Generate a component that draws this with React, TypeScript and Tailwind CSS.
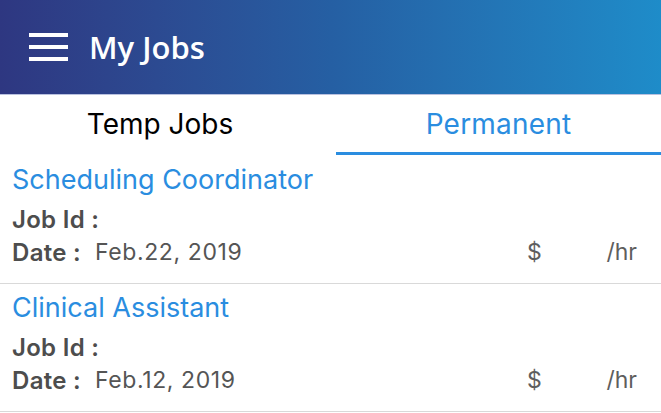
import React from 'react';

const jobs = [
  { title: 'Scheduling Coordinator', jobId: '', date: 'Feb.22, 2019', rate: '' },
  { title: 'Clinical Assistant', jobId: '', date: 'Feb.12, 2019', rate: '' },
];

export default function App() {
  return (
    <div className="w-[661px] h-[413px] overflow-hidden bg-white font-['Inter',sans-serif]">
      {/* Header */}
      <header className="h-[95px] flex items-center border-b border-[#b9c1df] bg-gradient-to-r from-[#2e3781] via-[#255fa3] to-[#1e8cc9]">
        <button className="ml-[29px] flex flex-col gap-[8px] w-[39px]">
          <span className="block h-[4px] bg-white" />
          <span className="block h-[4px] bg-white" />
          <span className="block h-[4px] bg-white" />
        </button>
        <h1 className="ml-[21px] text-[31px] font-semibold text-white font-['Open_Sans',sans-serif] leading-none">
          My Jobs
        </h1>
      </header>

      {/* Tabs */}
      <div className="flex h-[61px] gap-[16px]">
        <div className="w-[320px] flex items-center justify-center text-[28px] text-black pb-[4px]">
          Temp Jobs
        </div>
        <div className="flex-1 relative flex items-center justify-center text-[28px] text-[#2a8de0] pb-[4px] tracking-[0.2px]">
          Permanent
          <span className="absolute left-0 right-0 bottom-[1px] h-[3px] bg-[#2a8de0]" />
        </div>
      </div>

      {/* Job list */}
      <ul>
        {jobs.map((job) => (
          <li key={job.title} className="pl-[12px] pt-[5px] pb-[14px] border-b border-[#d9d9d9]">
            <div className="text-[27px] leading-[38px] text-[#2a8de0]">{job.title}</div>
            <div className="mt-[4px] h-[33px] text-[24px] leading-[33px] font-semibold text-[#4d4d4d] tracking-[0.3px]">
              Job Id : <span className="font-normal">{job.jobId}</span>
            </div>
            <div className="flex items-center h-[33px] leading-[33px] text-[#4d4d4d]">
              <span className="text-[24px] font-semibold tracking-[0.3px]">Date :</span>
              <span className="ml-[14px] text-[23px] text-[#555] tracking-[0.6px]">{job.date}</span>
              <div className="ml-auto mr-[24px] w-[110px] flex justify-between text-[23px] text-[#5e5e5e]">
                <span>$ {job.rate}</span>
                <span>/hr</span>
              </div>
            </div>
          </li>
        ))}
      </ul>
    </div>
  );
}
